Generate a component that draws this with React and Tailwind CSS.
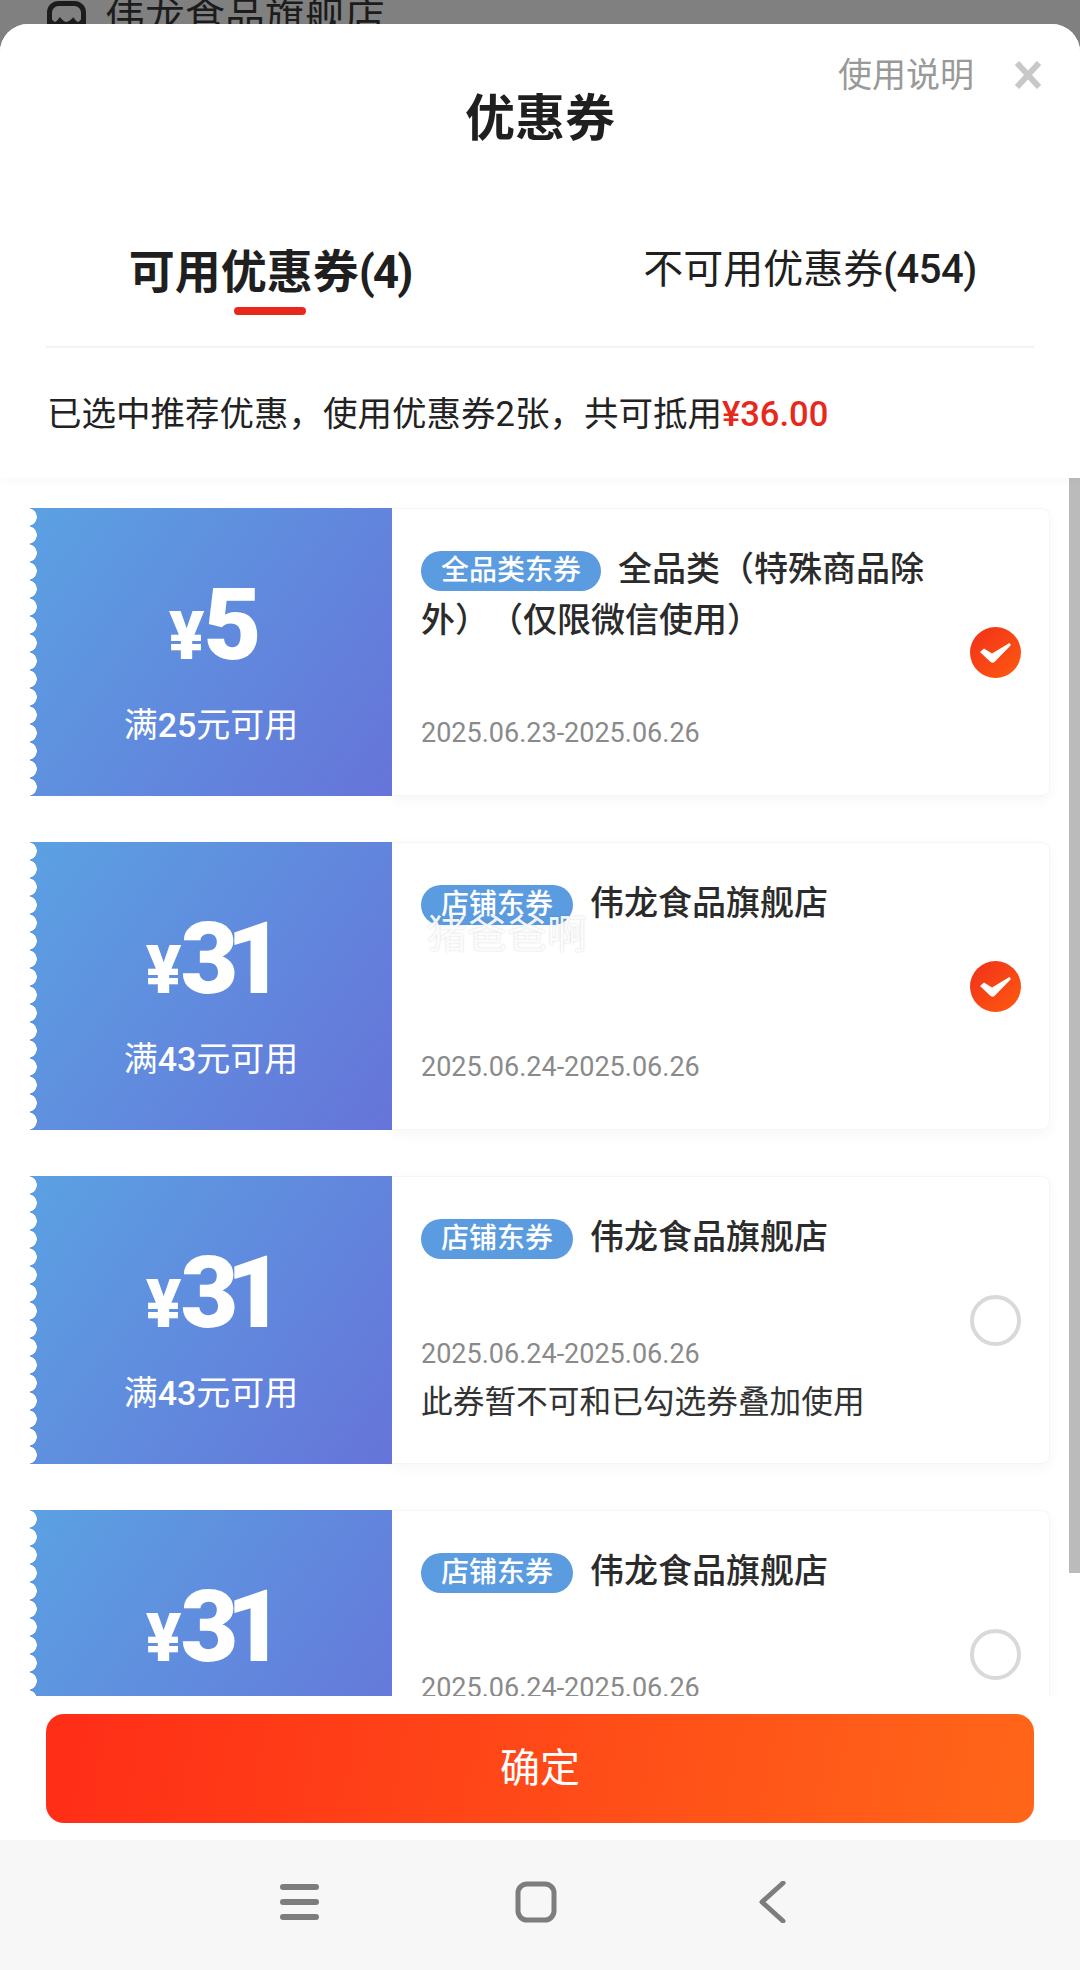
import React from "react";

const coupons = [
  { amount: "5", limit: "25", tag: "全品类东券", title: "全品类（特殊商品除外）（仅限微信使用）", date: "2025.06.23-2025.06.26", checked: true },
  { amount: "31", limit: "43", tag: "店铺东券", title: "伟龙食品旗舰店", date: "2025.06.24-2025.06.26", checked: true, watermark: true },
  { amount: "31", limit: "43", tag: "店铺东券", title: "伟龙食品旗舰店", date: "2025.06.24-2025.06.26", note: "此券暂不可和已勾选券叠加使用" },
  { amount: "31", limit: "43", tag: "店铺东券", title: "伟龙食品旗舰店", date: "2025.06.24-2025.06.26", note: "此券暂不可和已勾选券叠加使用" },
];

const CheckMark = () => (
  <svg width="51" height="51" viewBox="0 0 51 51" className="shrink-0">
    <defs>
      <linearGradient id="radio-fill" x1="0" y1="0" x2="1" y2="1">
        <stop offset="0" stopColor="#f0301a" />
        <stop offset="1" stopColor="#ff5a10" />
      </linearGradient>
    </defs>
    <circle cx="25.5" cy="25.5" r="25.5" fill="url(#radio-fill)" />
    <path d="M10 25 L14 21.5 L22 26.5 L39.5 16 L41 18 L24.5 35 Q22 36.5 20 34.5 Z" fill="#fff" />
  </svg>
);

const CouponCard = ({ coupon }) => (
  <div className="relative flex h-[288px] w-[1020px] shrink-0">
    <div className="relative flex w-[362px] shrink-0 flex-col items-center bg-[linear-gradient(125deg,#5ba1e2,#6674d9)] pt-[67px] text-white">
      <div className="absolute inset-y-0 left-0 w-[7px] bg-[radial-gradient(circle_at_-2px_9px,#fff_8.5px,transparent_9px)] bg-[length:7px_18px]" />
      <div className="flex items-baseline pr-[4px] font-black">
        <span className="text-[66px] leading-[100px]">¥</span>
        <span className="ml-[-1px] text-[100px] leading-[100px] tracking-[-12px]">{coupon.amount}</span>
      </div>
      <div className="mt-[18px] text-[34px] leading-[40px]">
        满<span className="font-medium">{coupon.limit}</span>元可用
      </div>
    </div>
    <div className="flex min-w-0 flex-1 items-center rounded-r-lg border border-l-0 border-[#f6f6f6] bg-white pr-[28px] pl-[29px] shadow-[0_4px_14px_rgba(0,0,0,0.04)]">
      <div className={`flex h-full min-w-0 flex-1 flex-col pt-[35px] pr-[25px] ${coupon.note ? "pb-[40px]" : "pb-[42px]"}`}>
        <div className="text-[34px] leading-[51px] font-medium text-[#2b2b2b] [text-spacing-trim:space-all]">
          <span className="mr-[17px] inline-block h-[40px] rounded-full bg-[#5b9bdf] px-[20px] align-[1px] text-[28px] leading-[40px] text-white">
            {coupon.tag}
          </span>
          {coupon.title}
        </div>
        <div className="mt-auto text-[27px] leading-[40px] text-[#8a8a8a]">{coupon.date}</div>
        {coupon.note && <div className="mt-[9px] text-[31.7px] leading-[40px] text-[#333]">{coupon.note}</div>}
      </div>
      {coupon.checked ? (
        <CheckMark />
      ) : (
        <div className="h-[51px] w-[51px] shrink-0 rounded-full border-[4px] border-[#d9d9d9]" />
      )}
    </div>
    {coupon.watermark && (
      <div className="absolute top-[73px] left-[397px] text-[40px] leading-[40px] text-white/90 [text-shadow:0_0_2px_rgba(0,0,0,0.18)]">
        猪爸爸啊
      </div>
    )}
  </div>
);

export default function App() {
  return (
    <div className="flex h-[1970px] w-[1080px] flex-col overflow-hidden bg-[#808080] font-['Roboto','Noto_Sans_CJK_SC',sans-serif]">
      {/* page behind the sheet */}
      <div className="flex h-[24px] shrink-0 items-start gap-[19px] overflow-hidden pl-[47px] text-[40px] leading-[36px] text-[#1c1c1c]">
        <svg width="39" height="40" viewBox="0 0 39 40" fill="none" stroke="#1c1c1c" strokeWidth="5" className="mt-[1px] shrink-0">
          <rect x="2.5" y="2.5" width="34" height="34" rx="9" />
          <path d="M3 20 Q8 27 13 20 Q19 27 26 20 Q31 27 36 20" />
        </svg>
        <span>伟龙食品旗舰店</span>
      </div>

      <div className="flex min-h-0 flex-1 flex-col overflow-hidden rounded-t-[28px] bg-white">
        {/* sheet header */}
        <div className="relative z-10 shrink-0 bg-white shadow-[0_3px_10px_rgba(0,0,0,0.03)]">
          <div className="grid h-[188px] grid-cols-[1fr_auto_1fr] items-start">
            <div />
            <h1 className="pt-[65px] text-[50px] leading-[60px] font-bold text-[#1f1f1f]">优惠券</h1>
            <div className="flex items-center justify-end gap-[40px] pt-[31px] pr-[38px]">
              <span className="text-[34px] leading-[40px] text-[#999]">使用说明</span>
              <svg width="28" height="28" viewBox="0 0 28 28" stroke="#c8c8c8" strokeWidth="6">
                <path d="M3 2 L25 26 M25 2 L3 26" />
              </svg>
            </div>
          </div>
          <div className="grid h-[134px] grid-cols-2">
            <div className="flex flex-col items-center">
              <div className="mt-[31px] text-[46px] leading-[58px] font-bold text-[#1f1f1f]">
                可用优惠券<span className="tracking-[-2px]">(4)</span>
              </div>
              <div className="mt-[6px] h-[8px] w-[72px] rounded-full bg-[#e8281a]" />
            </div>
            <div className="flex justify-center">
              <div className="mt-[32px] text-[40px] leading-[52px] text-[#1f1f1f]">
                不可用优惠券<span className="font-medium tracking-[-0.5px]">(454)</span>
              </div>
            </div>
          </div>
          <div className="mx-[46px] h-[2px] bg-[#f3f3f3]" />
          <div className="flex h-[130px] items-center pt-[4px] pl-[47px] text-[34.5px] text-[#222]">
            已选中推荐优惠，使用优惠券2张，共可抵用
            <span className="font-medium text-[#e8281a]">¥36.00</span>
          </div>
        </div>

        {/* coupon list */}
        <div className="relative flex min-h-0 flex-1 flex-col gap-[46px] overflow-hidden pt-[30px] pl-[30px]">
          {coupons.map((coupon, i) => (
            <CouponCard key={i} coupon={coupon} />
          ))}
          <div className="absolute top-0 right-0 h-[1095px] w-[11px] bg-[#bbb]" />
        </div>

        {/* confirm */}
        <div className="relative z-10 flex h-[144px] shrink-0 justify-center bg-white pt-[18px]">
          <button className="h-[109px] w-[988px] rounded-[18px] bg-[linear-gradient(100deg,#ff2d17,#ff6619)] text-[40px] text-white">
            确定
          </button>
        </div>

        {/* system nav */}
        <div className="flex h-[130px] shrink-0 items-start justify-center bg-[#f7f7f7] pt-[41px]">
          <svg width="540" height="42" viewBox="0 0 540 42" fill="none" stroke="#7d7d7d" className="ml-[19px]">
            <path d="M3 6 H36 M3 21 H36 M3 36 H36" strokeWidth="6" strokeLinecap="round" />
            <rect x="238" y="3" width="36" height="36" rx="9" strokeWidth="5" />
            <path d="M503 2 L482 21 L503 40" strokeWidth="5" strokeLinecap="round" strokeLinejoin="round" />
          </svg>
        </div>
      </div>
    </div>
  );
}
